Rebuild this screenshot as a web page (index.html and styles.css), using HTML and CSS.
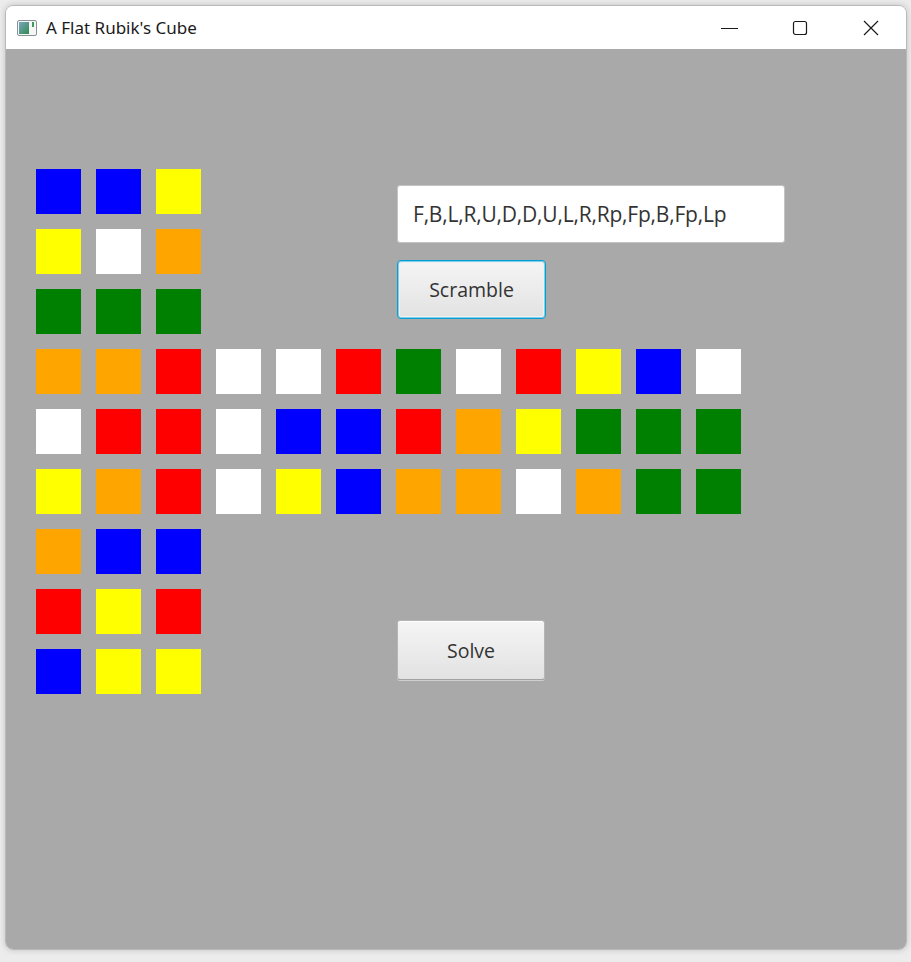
FILE: index.html
```html
<!DOCTYPE html>
<html>
<head>
<meta charset="utf-8">
<title>A Flat Rubik's Cube</title>
<link rel="stylesheet" href="styles.css">
</head>
<body>
<div class="window">
  <div class="titlebar">
    <div class="app-icon">
      <svg width="20" height="16" viewBox="0 0 20 16">
        <defs>
          <linearGradient id="g" x1="0" y1="0" x2="1" y2="1">
            <stop offset="0" stop-color="#7aa6c4"/>
            <stop offset="1" stop-color="#2f8a4c"/>
          </linearGradient>
        </defs>
        <rect x="0.5" y="0.5" width="19" height="15" rx="1.5" fill="#f4f6f6" stroke="#8a9196"/>
        <rect x="2" y="2" width="10" height="12" fill="url(#g)"/>
        <rect x="15" y="2" width="2" height="5" fill="#3c9a5c"/>
      </svg>
    </div>
    <div class="title">A Flat Rubik's Cube</div>
    <div class="caption-buttons">
      <div class="cap-btn"><svg width="18" height="18" viewBox="0 0 18 18"><line x1="1" y1="9.5" x2="18" y2="9.5" stroke="#1a1a1a" stroke-width="1"/></svg></div>
      <div class="cap-btn"><svg width="18" height="18" viewBox="0 0 18 18"><rect x="2.5" y="2.5" width="13" height="13" rx="2" fill="none" stroke="#1a1a1a" stroke-width="1.2"/></svg></div>
      <div class="cap-btn"><svg width="18" height="18" viewBox="0 0 18 18"><path d="M2 2 L16 16 M16 2 L2 16" stroke="#1a1a1a" stroke-width="1.2"/></svg></div>
    </div>
  </div>
  <div class="content">
    <div class="section">
      <div class="face">
        <div class="sq b"></div><div class="sq b"></div><div class="sq y"></div>
        <div class="sq y"></div><div class="sq w"></div><div class="sq o"></div>
        <div class="sq g"></div><div class="sq g"></div><div class="sq g"></div>
      </div>
      <div class="controls">
        <div class="textfield">F,B,L,R,U,D,D,U,L,R,Rp,Fp,B,Fp,Lp</div>
        <button class="btn focused">Scramble</button>
      </div>
    </div>
    <div class="band">
      <div class="sq o"></div><div class="sq o"></div><div class="sq r"></div><div class="sq w"></div><div class="sq w"></div><div class="sq r"></div><div class="sq g"></div><div class="sq w"></div><div class="sq r"></div><div class="sq y"></div><div class="sq b"></div><div class="sq w"></div>
      <div class="sq w"></div><div class="sq r"></div><div class="sq r"></div><div class="sq w"></div><div class="sq b"></div><div class="sq b"></div><div class="sq r"></div><div class="sq o"></div><div class="sq y"></div><div class="sq g"></div><div class="sq g"></div><div class="sq g"></div>
      <div class="sq y"></div><div class="sq o"></div><div class="sq r"></div><div class="sq w"></div><div class="sq y"></div><div class="sq b"></div><div class="sq o"></div><div class="sq o"></div><div class="sq w"></div><div class="sq o"></div><div class="sq g"></div><div class="sq g"></div>
    </div>
    <div class="section">
      <div class="face">
        <div class="sq o"></div><div class="sq b"></div><div class="sq b"></div>
        <div class="sq r"></div><div class="sq y"></div><div class="sq r"></div>
        <div class="sq b"></div><div class="sq y"></div><div class="sq y"></div>
      </div>
      <div class="controls lower">
        <button class="btn">Solve</button>
      </div>
    </div>
  </div>
</div>
</body>
</html>
```

FILE: styles.css
```css
html, body {
  margin: 0;
  padding: 0;
}
body {
  width: 911px;
  height: 962px;
  background: #ececec;
  overflow: hidden;
  font-family: "Open Sans", "Noto Sans", sans-serif;
}
.window {
  margin: 5px 0 0 5px;
  width: 900px;
  height: 943px;
  border: 1px solid #b9b9b9;
  border-radius: 8px;
  overflow: hidden;
  box-shadow: 0 0 6px rgba(0,0,0,0.18);
  display: flex;
  flex-direction: column;
}
.titlebar {
  height: 43px;
  background: #ffffff;
  display: flex;
  align-items: center;
  flex-shrink: 0;
}
.app-icon {
  margin-left: 11px;
  width: 20px;
  height: 16px;
  display: flex;
}
.title {
  margin-left: 9px;
  font-family: "Noto Sans", "Open Sans", sans-serif;
  font-size: 17px;
  color: #1a1a1a;
  flex: 1;
  padding-bottom: 1px;
}
.caption-buttons {
  display: flex;
  margin-right: 0;
}
.cap-btn {
  width: 71px;
  display: flex;
  justify-content: center;
  align-items: center;
}
.content {
  flex: 1;
  background: #a9a9a9;
  padding: 120px 0 0 30px;
}
.section {
  display: flex;
  align-items: flex-start;
  height: 165px;
}
.face {
  display: grid;
  grid-template-columns: repeat(3, 45px);
  grid-auto-rows: 45px;
  gap: 15px;
}
.band {
  display: grid;
  grid-template-columns: repeat(12, 45px);
  grid-auto-rows: 45px;
  gap: 15px;
  margin: 15px 0;
}
.sq.b { background: #0000ff; }
.sq.y { background: #ffff00; }
.sq.w { background: #ffffff; }
.sq.o { background: #ffa500; }
.sq.g { background: #008000; }
.sq.r { background: #ff0000; }
.controls {
  margin-left: 196px;
  margin-top: 16px;
  display: flex;
  flex-direction: column;
  align-items: flex-start;
  gap: 17px;
}
.controls.lower {
  margin-top: 91px;
}
.textfield {
  height: 56px;
  box-sizing: content-box;
  background: #ffffff;
  border: 1px solid #c4c4c4;
  border-radius: 3px;
  padding: 0 0 0 15px;
  width: 371px;
  display: flex;
  align-items: center;
  font-size: 21px;
  color: #333333;
  letter-spacing: -0.2px;
}
.btn {
  width: 148px;
  height: 60px;
  box-sizing: border-box;
  border: 1px solid #b5b5b5;
  border-bottom-color: #a2a2a2;
  border-radius: 3px;
  background: linear-gradient(#f5f5f5, #e2e2e2);
  box-shadow: inset 0 1px 0 #ffffff, 0 1px 0 #cfcfcf;
  font-family: "Open Sans", "Noto Sans", sans-serif;
  font-size: 19.5px;
  color: #333333;
  padding: 0;
  margin: 0;
}
.btn.focused {
  width: 149px;
  height: 59px;
  border: 1px solid #039ed3;
  border-radius: 4px;
  box-shadow: inset 0 0 0 1px #7fd0ec, inset 0 0 0 2px #f0f0f0;
}
```
